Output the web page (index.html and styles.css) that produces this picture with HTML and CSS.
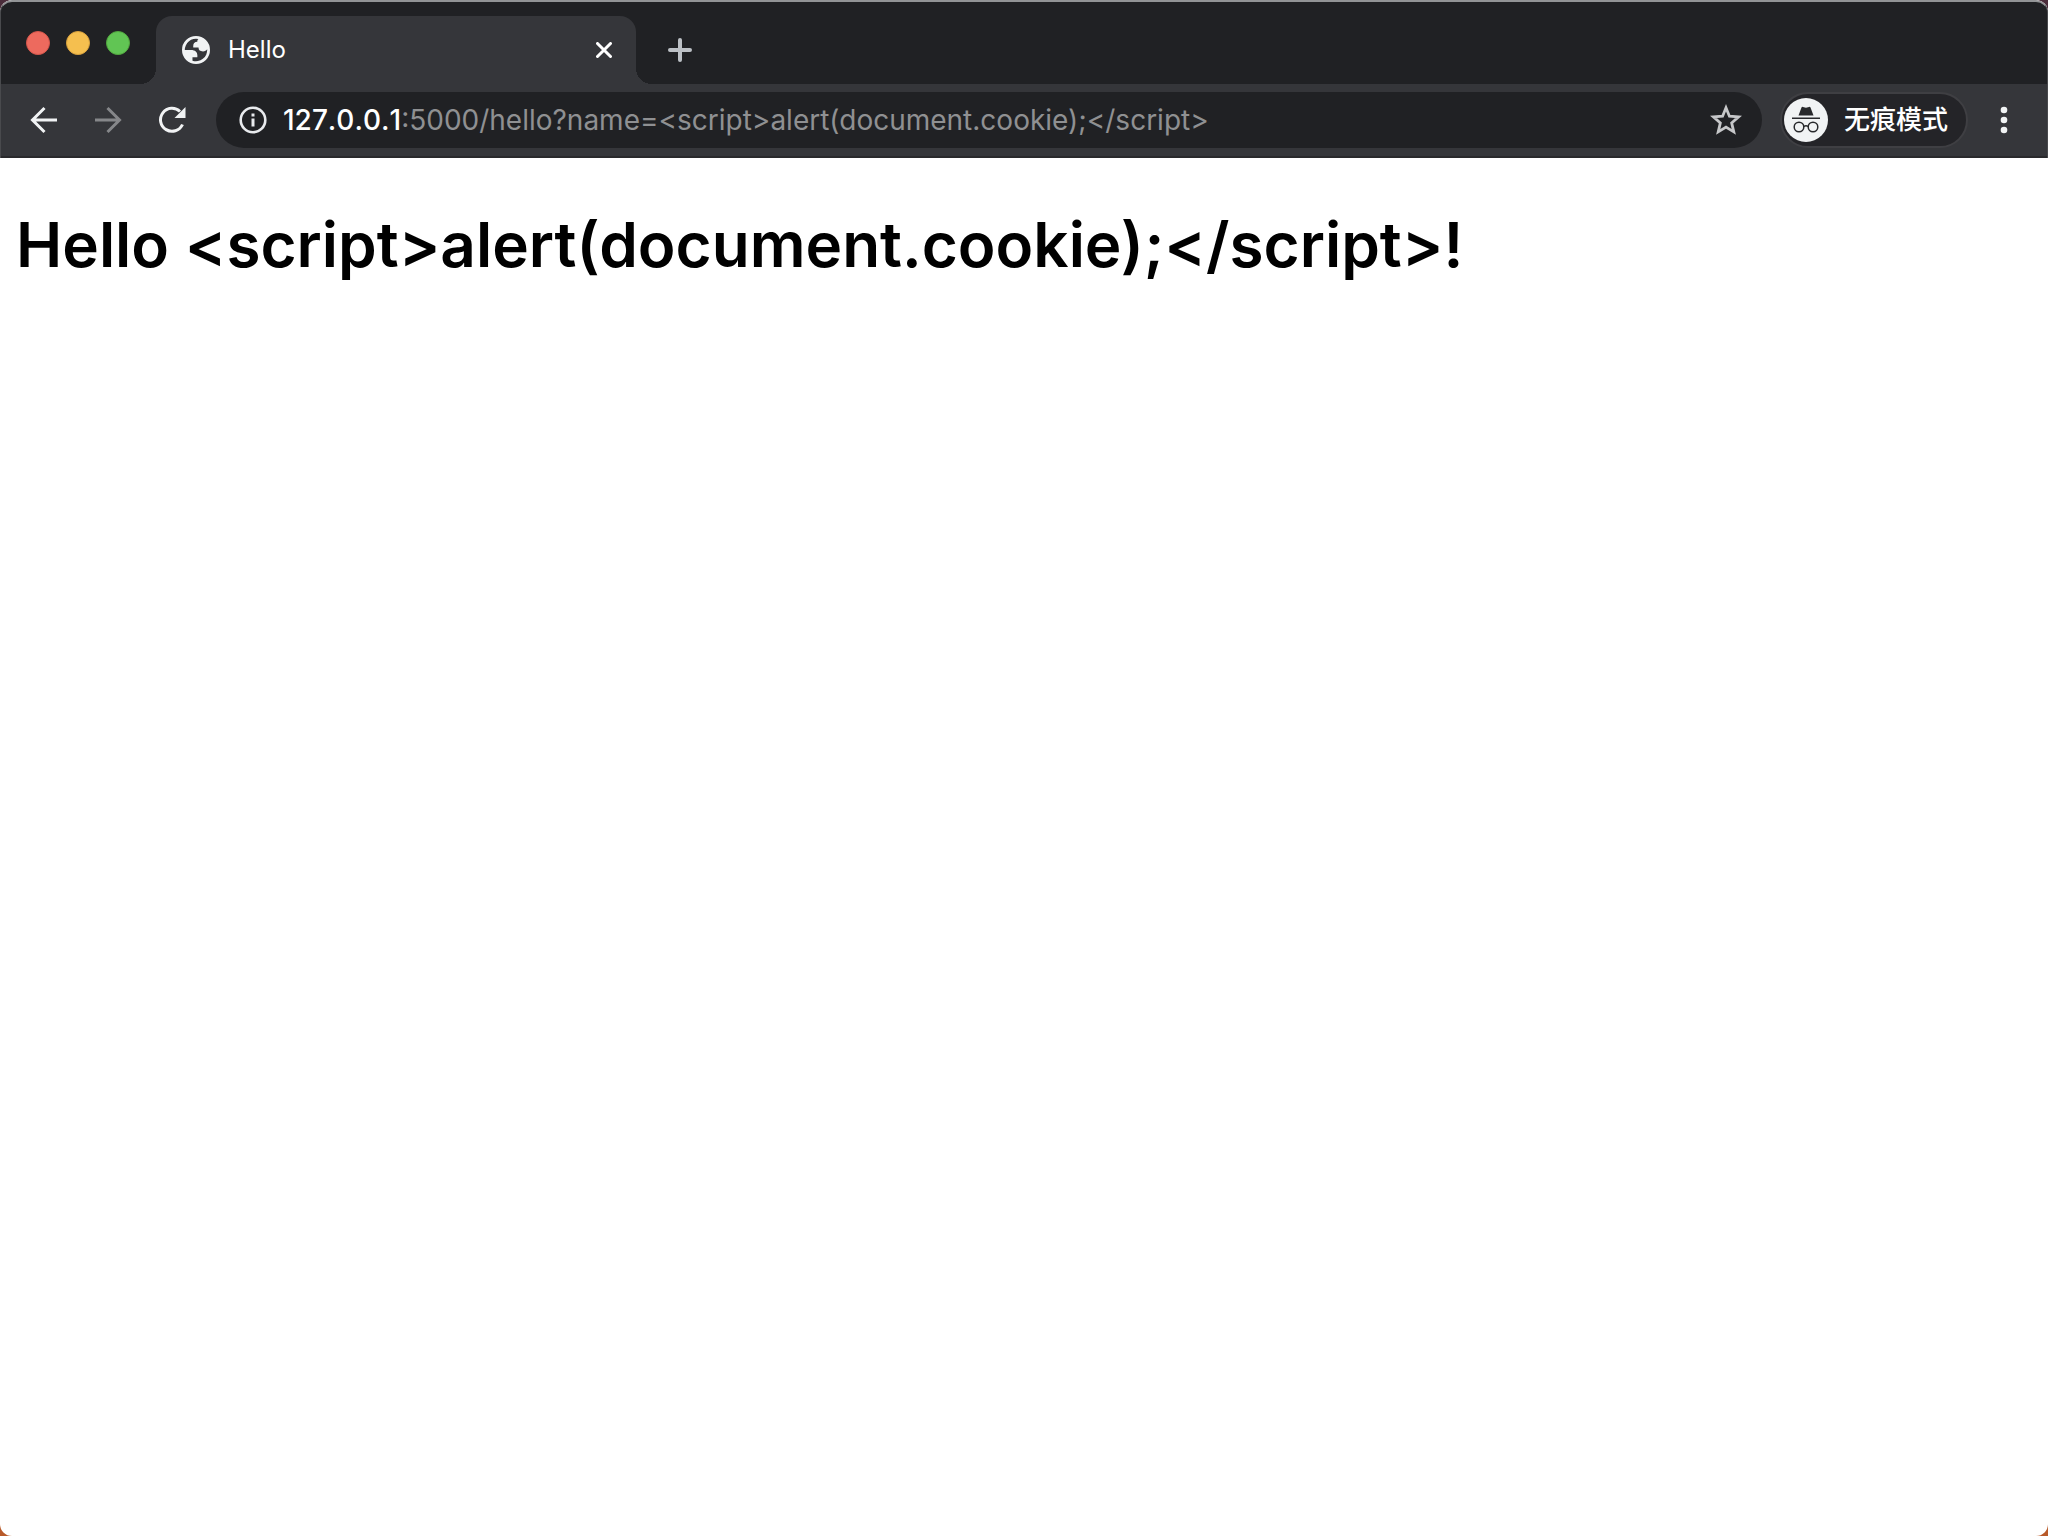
FILE: index.html
```html
<!DOCTYPE html>
<html lang="zh-CN">
<head>
<meta charset="utf-8">
<meta name="viewport" content="width=device-width, initial-scale=1">
<title>Hello</title>
<link rel="stylesheet" href="styles.css">
</head>
<body>
<div class="window">
  <header class="chrome">
    <div class="tab-strip">
      <div class="window-controls">
        <button class="light light-close" aria-label="关闭"></button>
        <button class="light light-minimize" aria-label="最小化"></button>
        <button class="light light-zoom" aria-label="缩放"></button>
      </div>
      <div class="tab">
        <svg class="favicon" viewBox="2 2 20 20" aria-hidden="true">
          <path fill="#f1f3f4" fill-rule="evenodd" d="M12 2a10 10 0 1 1 0 20a10 10 0 1 1 0-20zM4 12h4.400c3.407.022 4.922 1.730 4.543 5.127H9.488v2.470a8.004 8.004 0 0 0 10.498-8.083C19.327 12.504 18.332 13 17 13c-2.137 0-3.206-.916-3.206-2.750h-3.748c-.274-2.728.683-4.092 2.870-4.092 0-.975.327-1.597.811-1.970A8 8 0 0 0 4 12z"/>
        </svg>
        <span class="tab-title">Hello</span>
        <button class="icon-button tab-close" aria-label="关闭标签页">
          <svg class="icon-small" viewBox="0 0 16 16"><path d="M1.500 1.500L14.500 14.500M14.500 1.500L1.500 14.500" fill="none" stroke="#fff" stroke-width="3" stroke-linecap="round"/></svg>
        </button>
      </div>
      <button class="icon-button new-tab" aria-label="新标签页">
        <svg class="icon-plus" viewBox="0 0 24 24"><path d="M12 2V22M2 12H22" fill="none" stroke="#bdc1c6" stroke-width="4" stroke-linecap="round"/></svg>
      </button>
    </div>
    <div class="toolbar">
      <nav class="nav-buttons">
        <button class="icon-button" aria-label="后退">
          <svg class="icon" viewBox="0 0 28 28"><path d="M27 14H3M14.500 2L2.500 14L14.500 26" fill="none" stroke="#f1f3f4" stroke-width="3"/></svg>
        </button>
        <button class="icon-button" aria-label="前进" disabled>
          <svg class="icon" viewBox="0 0 28 28"><path d="M1 14H25M13.500 2L25.500 14L13.500 26" fill="none" stroke="#86878a" stroke-width="3"/></svg>
        </button>
        <button class="icon-button" aria-label="重新加载">
          <svg class="icon" viewBox="0 0 28 28"><path d="M22 5.500A11.500 11.500 0 1 0 24.500 18.500" fill="none" stroke="#f1f3f4" stroke-width="3"/><path d="M27.500 1V12H16.500Z" fill="#f1f3f4"/></svg>
        </button>
      </nav>
      <form class="omnibox">
        <button type="button" class="icon-button site-info" aria-label="查看网站信息">
          <svg class="icon" viewBox="0 0 28 28"><circle cx="14" cy="14" r="12.300" fill="none" stroke="#e8eaed" stroke-width="2.600"/><path d="M14 7.500V10.500M14 12.500V20.500" fill="none" stroke="#e8eaed" stroke-width="3"/></svg>
        </button>
        <label class="host" for="address">127.0.0.1</label>
        <input class="address" id="address" type="text" spellcheck="false" value=":5000/hello?name=&lt;script&gt;alert(document.cookie);&lt;/script&gt;">
        <button type="button" class="icon-button bookmark" aria-label="添加书签">
          <svg class="icon-star" viewBox="0 0 30 30"><path d="M15 3.500L18.200 11.400L26.800 12.100L20.300 17.700L22.300 26.100L15 21.600L7.700 26.100L9.700 17.700L3.200 12.100L11.800 11.400Z" fill="none" stroke="#c6c7c9" stroke-width="2.600"/></svg>
        </button>
      </form>
      <button class="profile">
        <svg class="avatar" viewBox="0 0 44 44" aria-hidden="true">
          <circle cx="22" cy="22" r="22" fill="#f1f3f4"/>
          <path d="M14.500 17.500L17.500 9.500Q18 8.500 19 9L22 9.700L25 9Q26 8.500 26.500 9.500L29.500 17.500ZM8 19.500H36V21H8Z" fill="#28292c"/>
          <g fill="none" stroke="#28292c" stroke-width="1.500"><circle cx="15" cy="29" r="4.800"/><circle cx="29" cy="29" r="4.800"/><path d="M19.800 28.500Q22 27 24.200 28.500"/></g>
        </svg>
        <span>无痕模式</span>
      </button>
      <button class="icon-button menu" aria-label="菜单">
        <svg class="icon-menu" viewBox="0 0 8 28"><g fill="#f1f3f4"><circle cx="4" cy="4" r="3.300"/><circle cx="4" cy="14" r="3.300"/><circle cx="4" cy="24" r="3.300"/></g></svg>
      </button>
    </div>
  </header>
  <main class="page">
    <h1 class="greeting">Hello &lt;script&gt;alert(document.cookie);&lt;/script&gt;!</h1>
  </main>
</div>
</body>
</html>
```
FILE: styles.css
```css
* {
  box-sizing: border-box;
}

html {
  background: linear-gradient(#4a2c3a 50%, #b85a2a 50%);
}

body {
  margin: 0;
  font-family: Inter, "Noto Sans CJK SC", sans-serif;
}

button {
  padding: 0;
  border: 0;
  background: none;
  font: inherit;
  color: inherit;
}

svg {
  display: block;
}

.window {
  display: flex;
  flex-direction: column;
  min-height: 100vh;
  border-radius: 12px;
  overflow: hidden;
  background: #fff;
}

.chrome {
  border: solid #494a4d;
  border-width: 2px 1px 0;
  border-top-color: #929496;
  border-radius: 12px 12px 0 0;
  background: #202124;
}

.tab-strip {
  display: flex;
  height: 82px;
  padding: 14px 0 0 25px;
}

.window-controls {
  display: flex;
  gap: 16px;
  width: 130px;
  padding-top: 15px;
}

.light {
  width: 24px;
  height: 24px;
  border-radius: 50%;
}

.light-close {
  background: #ed6a5e;
  border: 1px solid #d5564b;
}

.light-minimize {
  background: #f5bf4f;
  border: 1px solid #d8a13d;
}

.light-zoom {
  background: #61c554;
  border: 1px solid #51a73e;
}

.tab {
  position: relative;
  display: flex;
  align-items: center;
  width: 480px;
  padding: 0 24px 0 26px;
  border-radius: 16px 16px 0 0;
  background: #35363a;
  color: #fff;
}

/* Curved feet that join the tab to the toolbar. */
.tab::before,
.tab::after {
  content: "";
  position: absolute;
  bottom: 0;
  width: 16px;
  height: 16px;
}

.tab::before {
  right: 100%;
  background: radial-gradient(circle at 0 0, #202124 16px, #35363a 16px);
}

.tab::after {
  left: 100%;
  background: radial-gradient(circle at 100% 0, #202124 16px, #35363a 16px);
}

.favicon {
  width: 28px;
  height: 28px;
}

.tab-title {
  flex: 1;
  margin-left: 18px;
  font-size: 24px;
  line-height: 32px;
}

.icon-button {
  display: flex;
  align-items: center;
  justify-content: center;
}

.icon-small {
  width: 16px;
  height: 16px;
}

.icon {
  width: 28px;
  height: 28px;
}

.tab-close {
  width: 16px;
}

.new-tab {
  margin-left: 32px;
}

.icon-plus {
  width: 24px;
  height: 24px;
}

.toolbar {
  display: flex;
  align-items: center;
  height: 74px;
  padding: 0 39px 0 29px;
  border-bottom: 2px solid #29292c;
  background: #35363a;
}

.nav-buttons {
  display: flex;
  gap: 36px;
}

.omnibox {
  display: flex;
  flex: 1;
  align-items: center;
  height: 56px;
  margin: 0 18px 0 30px;
  padding: 0 20px 0 23px;
  border-radius: 28px;
  background: #202124;
  font-size: 28px;
}

.host {
  margin-left: 16px;
  font-kerning: none;
  font-weight: 500;
  color: #fff;
}

.address {
  flex: 1;
  min-width: 0;
  padding: 0;
  border: 0;
  outline: 0;
  background: none;
  font: inherit;
  color: #8f9092;
}

.icon-star {
  width: 32px;
  height: 32px;
}

.profile {
  display: flex;
  align-items: center;
  gap: 16px;
  height: 56px;
  padding: 0 18px 0 2px;
  border: 2px solid #3f3f43;
  border-radius: 28px;
  background: #242428;
  color: #fff;
  font-size: 26px;
  font-weight: 500;
  line-height: 36px;
}

.avatar {
  width: 44px;
  height: 44px;
}

.menu {
  margin-left: 32px;
}

.icon-menu {
  width: 8px;
  height: 28px;
}

.page {
  flex: 1;
  padding: 0 16px;
}

.greeting {
  margin: 42px 0;
  font-size: 62px;
  font-weight: 600;
  line-height: 90px;
}
```
